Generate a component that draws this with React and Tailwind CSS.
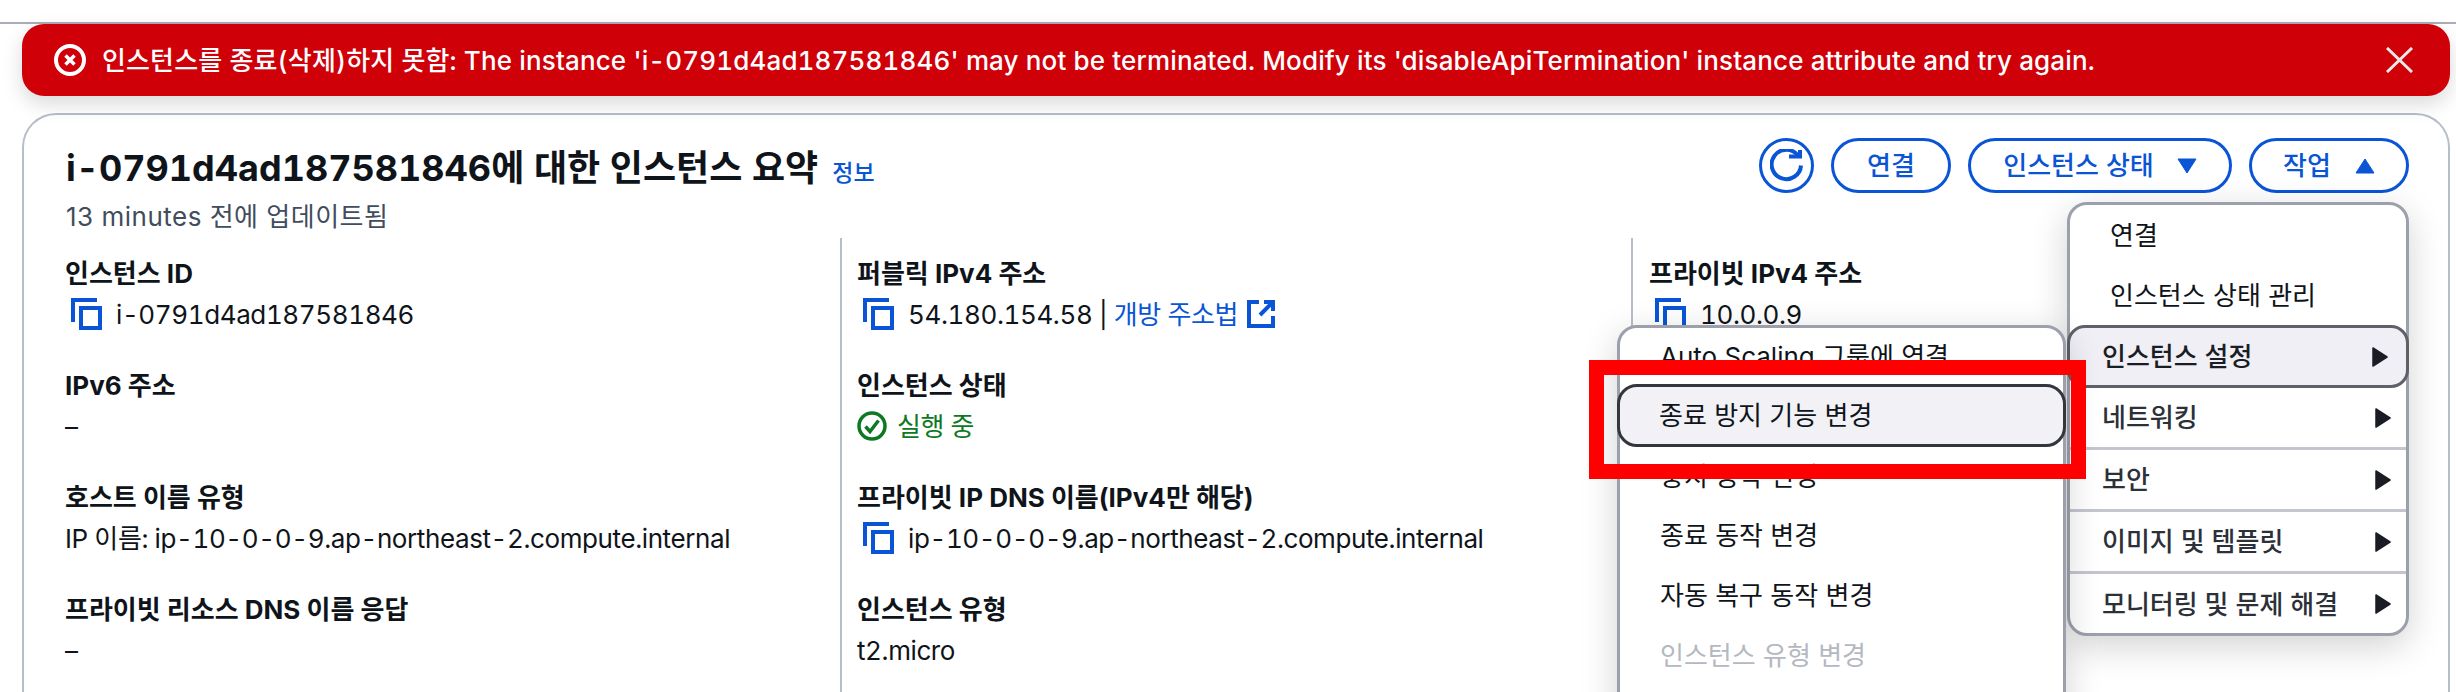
import React from 'react';

// Icono de copiar
function CopyIcon() {
  return (
    <svg width="32" height="32" viewBox="0 0 32 32" fill="none" stroke="#0a55d6" strokeWidth="4" className="shrink-0">
      <path d="M2 24V2H26" />
      <rect x="10" y="10" width="19" height="20" />
    </svg>
  );
}

function Field({ label, children }) {
  return (
    <div className="h-[112px]">
      <div className="text-[26px] leading-[36px] font-bold text-[#0f141a]">{label}</div>
      <div className="mt-[2px] h-[40px] flex items-center text-[26px] tabular-nums tracking-[-0.4px] text-[#0f141a]">{children}</div>
    </div>
  );
}

function CopyValue({ children }) {
  return (
    <span className="flex items-center ml-[6px] gap-[13px] whitespace-nowrap">
      <CopyIcon />
      {children}
    </span>
  );
}

function PillButton({ children, className }) {
  return (
    <button className={`h-[55px] rounded-full border-[3.5px] border-[#0a55d6] text-[#0a55d6] text-[26px] font-medium flex items-center justify-center ${className}`}>
      {children}
    </button>
  );
}

function MenuRow({ children, className = 'h-[60px]' }) {
  return <div className={`flex items-center pl-[40px] text-[26px] text-[#0f141a] ${className}`}>{children}</div>;
}

function GroupRow({ children, active, last }) {
  return (
    <div
      className={`flex items-center justify-between pl-[32px] pr-[15px] text-[26px] font-medium ${
        active
          ? 'h-[63px] -mx-[3px] px-[35px] pr-[18px] bg-[#f0eff5] border-[3.5px] border-t-[3.5px] border-[#5f6168] rounded-[18px] font-bold text-[#1a1d24]'
          : last
            ? 'h-[60px] text-[#2c3039]'
            : 'h-[62px] border-b-[3px] border-[#c3c6cf] text-[#2c3039]'
      }`}
    >
      <span>{children}</span>
      <svg width="16" height="20" viewBox="0 0 16 20" fill="#1a1d24"><path d="M1 1 L15 10 L1 19Z" stroke="#1a1d24" strokeWidth="1.5" strokeLinejoin="round" /></svg>
    </div>
  );
}

export default function App() {
  return (
    <div className="relative w-[2456px] h-[692px] overflow-hidden bg-white font-['Inter','Noto_Sans_CJK_KR',sans-serif]">
      <div className="pt-[22px]">
        <div className="h-[2px] bg-[#a9adb5]" />

        {/* Banner de error */}
        <div className="mx-[22px] w-[2428px] h-[72px] bg-[#d00008] rounded-[22px] flex items-center pl-[32px] pr-[37px] text-white shadow-[0_8px_20px_rgba(0,0,0,0.15)] relative">
          <svg width="32" height="32" viewBox="0 0 32 32" fill="none" stroke="#fff" className="shrink-0">
            <circle cx="16" cy="16" r="14" strokeWidth="4" />
            <path d="M11.5 11.5L20.5 20.5M20.5 11.5L11.5 20.5" strokeWidth="3.5" />
          </svg>
          <span className="ml-[16px] text-[26px] font-medium tabular-nums tracking-[0.14px] whitespace-nowrap">
            인스턴스를 종료(삭제)하지 못함: The instance 'i-0791d4ad187581846' may not be terminated. Modify its 'disableApiTermination' instance attribute and try again.
          </span>
          <svg width="27" height="26" viewBox="0 0 27 26" fill="none" stroke="#e9e9e9" strokeWidth="3" className="ml-auto shrink-0">
            <path d="M1 1L26 25M26 1L1 25" />
          </svg>
        </div>

        {/* Tarjeta del resumen */}
        <div className="mt-[17px] mx-[22px] w-[2428px] h-[600px] bg-white border-2 border-b-0 border-[#b6bec9] rounded-t-[34px]">
          <div className="h-[123px] pl-[42px] pr-[39px] flex justify-between">
            <div className="pt-[28px]">
              <div className="flex items-baseline whitespace-nowrap">
                <h1 className="text-[36px] leading-[50px] font-bold tabular-nums text-[#0f141a]">i-0791d4ad187581846에 대한 인스턴스 요약</h1>
                <a className="ml-[14px] text-[23px] font-medium text-[#0a55d6]">정보</a>
              </div>
              <p className="mt-[6px] text-[26px] leading-[36px] tracking-[0.5px] text-[#414d5c]">13 minutes 전에 업데이트됨</p>
            </div>
            <div className="pt-[23px] flex gap-[17px]">
              <PillButton className="w-[55px]">
                <svg width="33" height="33" viewBox="0 0 33 33" fill="none" stroke="#0a55d6" strokeWidth="4">
                  <path d="M28 6.5A14.7 14.7 0 1 0 31 16.5" />
                  <path d="M19 7.5H30V1" />
                </svg>
              </PillButton>
              <PillButton className="w-[120px]">연결</PillButton>
              <PillButton className="w-[264px] gap-[23px]">
                인스턴스 상태
                <svg width="20" height="16" viewBox="0 0 20 16" fill="#0a55d6"><path d="M1 1H19L10 15Z" stroke="#0a55d6" strokeLinejoin="round" /></svg>
              </PillButton>
              <PillButton className="w-[160px] gap-[24px]">
                작업
                <svg width="20" height="16" viewBox="0 0 20 16" fill="#0a55d6"><path d="M1 15H19L10 1Z" stroke="#0a55d6" strokeLinejoin="round" /></svg>
              </PillButton>
            </div>
          </div>

          <div className="grid grid-cols-[816px_791px_1fr] h-[480px]">
            <div className="pl-[41px] pt-[18px]">
              <Field label="인스턴스 ID"><CopyValue>i-0791d4ad187581846</CopyValue></Field>
              <Field label="IPv6 주소">–</Field>
              <Field label="호스트 이름 유형">IP 이름: ip-10-0-0-9.ap-northeast-2.compute.internal</Field>
              <Field label="프라이빗 리소스 DNS 이름 응답">–</Field>
            </div>
            <div className="border-l-2 border-[#b6bec9] pl-[15px] pt-[18px]">
              <Field label="퍼블릭 IPv4 주소">
                <CopyValue>
                  <span>
                    54.180.154.58 | <a className="text-[#0a55d6]">개방 주소법</a>
                  </span>
                  <svg width="28" height="28" viewBox="0 0 28 28" fill="none" stroke="#0a55d6" strokeWidth="4" className="-ml-[4px]">
                    <path d="M12 2H2V26H26V16" />
                    <path d="M17 2H26V11M26 2L13 15" />
                  </svg>
                </CopyValue>
              </Field>
              <Field label="인스턴스 상태">
                <span className="flex items-center gap-[10px] text-[#0d7a23]">
                  <svg width="30" height="32" viewBox="0 0 30 32" fill="none" stroke="#0d7a23" strokeWidth="3.5">
                    <circle cx="15" cy="16" r="13" />
                    <path d="M8.5 16.5L13 21.5L21.5 10.5" />
                  </svg>
                  실행 중
                </span>
              </Field>
              <Field label="프라이빗 IP DNS 이름(IPv4만 해당)"><CopyValue>ip-10-0-0-9.ap-northeast-2.compute.internal</CopyValue></Field>
              <Field label="인스턴스 유형">t2.micro</Field>
            </div>
            <div className="border-l-2 border-[#b6bec9] pl-[16px] pt-[18px]">
              <Field label="프라이빗 IPv4 주소"><CopyValue>10.0.0.9</CopyValue></Field>
            </div>
          </div>
        </div>
      </div>

      {/* Menú de acciones */}
      <div className="absolute left-[2067px] top-[202px] w-[342px] h-[434px] bg-white border-[3.5px] border-[#9ba0ab] rounded-[20px] shadow-[0_10px_36px_rgba(0,0,0,0.18)]">
        <MenuRow>연결</MenuRow>
        <MenuRow>인스턴스 상태 관리</MenuRow>
        <GroupRow active>인스턴스 설정</GroupRow>
        <GroupRow>네트워킹</GroupRow>
        <GroupRow>보안</GroupRow>
        <GroupRow>이미지 및 템플릿</GroupRow>
        <GroupRow last>모니터링 및 문제 해결</GroupRow>
      </div>

      {/* Submenú */}
      <div className="absolute left-[1617px] top-[325px] w-[449px] h-[420px] bg-white border-[3.5px] border-[#9ba0ab] rounded-[20px] shadow-[0_10px_36px_rgba(0,0,0,0.18)]">
        <MenuRow className="h-[56px]">Auto Scaling 그룹에 연결</MenuRow>
        <div className="h-[63px] -mx-[3px] flex items-center pl-[39px] text-[26px] text-[#0f141a] bg-[#f1f1f6] border-[3.5px] border-[#33363d] rounded-[20px]">종료 방지 기능 변경</div>
        <MenuRow className="h-[58px]">중지 동작 변경</MenuRow>
        <MenuRow>종료 동작 변경</MenuRow>
        <MenuRow>자동 복구 동작 변경</MenuRow>
        <div className="h-[60px] flex items-center pl-[40px] text-[26px] text-[#b4b8c0]">인스턴스 유형 변경</div>
      </div>

      {/* Rectángulo de resaltado */}
      <div className="absolute left-[1589px] top-[360px] w-[497px] h-[119px] border-[15px] border-[#ff0000]" />
    </div>
  );
}
